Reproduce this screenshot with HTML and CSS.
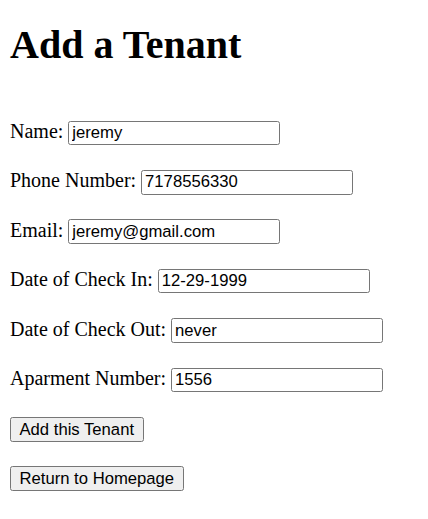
FILE: index.html
```html
<!DOCTYPE html>
<html>
<head>
<meta charset="utf-8">
<link rel="stylesheet" href="styles.css">
</head>
<body>
<div class="page">
<h1 class="title">Add a Tenant</h1>
<form class="form">
<div class="row"><label class="label">Name:</label><input class="field" type="text" value="jeremy"></div>
<div class="row"><label class="label">Phone Number:</label><input class="field" type="text" value="7178556330"></div>
<div class="row"><label class="label">Email:</label><input class="field" type="text" value="jeremy@gmail.com"></div>
<div class="row"><label class="label">Date of Check In:</label><input class="field" type="text" value="12-29-1999"></div>
<div class="row"><label class="label">Date of Check Out:</label><input class="field" type="text" value="never"></div>
<div class="row"><label class="label">Aparment Number:</label><input class="field" type="text" value="1556"></div>
<div class="row"><button class="btn" type="button">Add this Tenant</button></div>
<div class="row"><button class="btn" type="button">Return to Homepage</button></div>
</form>
</div>
</body>
</html>
```

FILE: styles.css
```css
html, body {
  margin: 0;
  padding: 0;
  background: #fff;
}
body {
  font-family: "Liberation Serif", "Times New Roman", serif;
  font-size: 20px;
  color: #000;
}
.page {
  padding: 22px 10px 0;
}
.title {
  font-size: 40px;
  font-weight: bold;
  line-height: 46px;
  margin: 0;
}
.form {
  margin: 52.7px 0 0;
  display: flex;
  flex-direction: column;
  gap: 24.9px;
}
.row {
  display: flex;
  align-items: baseline;
  gap: 5px;
  height: 24.5px;
}
.label {
  line-height: 20px;
  white-space: nowrap;
}
.field {
  font-family: "Liberation Sans", Arial, sans-serif;
  font-size: 16.67px;
  padding: 1.25px 3px;
  border: 1px solid #767676;
  border-radius: 2.5px;
  color: #000;
  background: #fff;
  width: 212px;
  height: 24.5px;
  box-sizing: border-box;
  margin: 0;
}
.btn {
  font-family: "Liberation Sans", Arial, sans-serif;
  font-size: 16.67px;
  padding: 1.25px 8.5px;
  height: 25px;
  border: 1px solid #767676;
  border-radius: 2.5px;
  background: #efefef;
  color: #000;
  margin: 0;
}
```
